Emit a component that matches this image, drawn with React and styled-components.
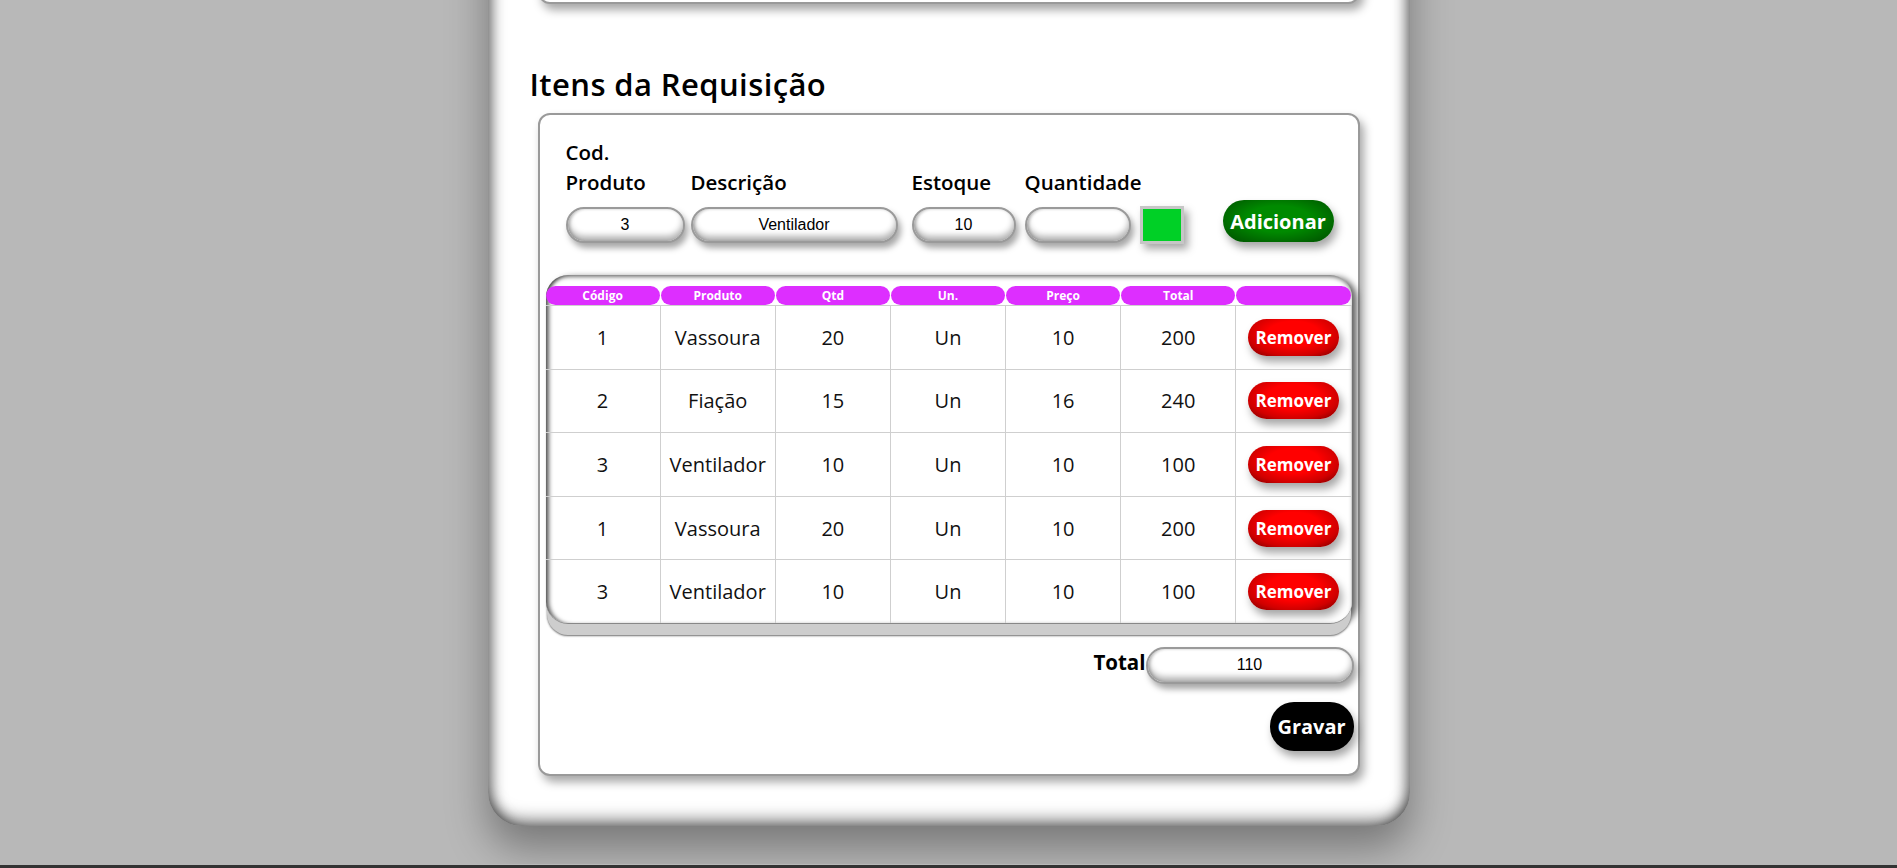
import React from "react";
import styled, { createGlobalStyle } from "styled-components";

const GlobalStyle = createGlobalStyle`
  html, body {
    margin: 0;
    padding: 0;
    background: #b8b8b8;
    overflow: hidden;
  }
  * {
    box-sizing: border-box;
  }
`;

const FONT = `"Open Sans", "Liberation Sans", sans-serif`;

const Page = styled.div`
  display: flex;
  flex-direction: column;
  align-items: center;
  font-family: ${FONT};
  padding-bottom: 38px;
`;

const Card = styled.div`
  width: 922px;
  margin-top: -250px;
  padding: 46px 50px 50px;
  background: #fff;
  border-radius: 34px;
  box-shadow: inset 12px 0 14px -8px rgba(0, 0, 0, 0.55),
    inset -12px 0 14px -8px rgba(0, 0, 0, 0.55),
    inset 0 -14px 16px -8px rgba(0, 0, 0, 0.5),
    0 22px 40px rgba(0, 0, 0, 0.35);
`;

const Panel = styled.div`
  background: #fff;
  border: 2px solid #9a9a9a;
  border-radius: 12px;
  box-shadow: 4px 6px 10px rgba(0, 0, 0, 0.35);
  height: ${(p) => (p.height ? `${p.height}px` : "auto")};
  padding: ${(p) => p.padding || "0"};
`;

const Heading = styled.h2`
  margin: 58px 0 6px -8px;
  font-size: 31px;
  line-height: 45px;
  font-weight: 600;
  letter-spacing: 0.4px;
  color: #000;
`;

const FormRow = styled.div`
  display: flex;
  align-items: flex-end;
  padding-left: 22px;
`;

const Field = styled.div`
  display: flex;
  flex-direction: column;
  width: ${(p) => p.width}px;
  margin-right: ${(p) => p.gap}px;
`;

const Label = styled.label`
  font-size: 20.5px;
  line-height: 30px;
  font-weight: 600;
  color: #000;
  margin-bottom: 10px;
  white-space: ${(p) => (p.wrap ? "normal" : "nowrap")};
`;

const Input = styled.input`
  width: ${(p) => (p.width ? `${p.width}px` : "100%")};
  height: ${(p) => p.h || 36}px;
  border: 2px solid #9a9a9a;
  border-radius: 20px;
  background: #fff;
  text-align: center;
  font-family: "Liberation Sans", Arial, sans-serif;
  font-size: 16px;
  color: #000;
  outline: none;
  box-shadow: inset 0 -5px 6px rgba(0, 0, 0, 0.3),
    inset 2px 0 3px rgba(0, 0, 0, 0.2), 3px 5px 6px rgba(0, 0, 0, 0.35);
`;

const ColorBox = styled.div`
  width: 44px;
  height: 38px;
  margin-right: 39px;
  margin-bottom: -1px;
  background: #00d026;
  border: 3px solid #c6c6c6;
  box-shadow: 4px 5px 8px rgba(0, 0, 0, 0.35);
`;

const PillButton = styled.button`
  border: none;
  border-radius: 24px;
  color: #fff;
  font-family: ${FONT};
  font-weight: 700;
  cursor: pointer;
  width: ${(p) => p.w}px;
  height: ${(p) => p.h}px;
  font-size: ${(p) => p.fs}px;
  background: ${(p) => p.bg};
  box-shadow: 3px 6px 8px rgba(0, 0, 0, 0.35);
  padding: 0;
  white-space: nowrap;
`;

const AddButton = styled(PillButton)`
  align-self: flex-end;
  transform: translateY(-1px);
`;

const TableWrap = styled.div`
  margin: 32px 2px 0;
  padding-top: 11px;
  border-radius: 22px;
  background: #fff;
  box-shadow: inset 0 3px 4px -1px rgba(0, 0, 0, 0.5),
    inset 5px 0 4px -2px rgba(0, 0, 0, 0.6),
    0 12px 0 -1px #cdcdcd, 0 13px 2px -1px #6f6f6f,
    5px 2px 6px rgba(0, 0, 0, 0.6);
  overflow: hidden;
  border-bottom: 1px solid #888;
`;

const Grid = styled.div`
  display: grid;
  grid-template-columns: repeat(7, 1fr);
`;

const HeadCell = styled.div`
  height: 19px;
  margin-right: 1px;
  background: #dd2eff;
  border-radius: 12px;
  color: #fff;
  font-size: 12px;
  font-weight: 700;
  line-height: 19px;
  text-align: center;
`;

const Cell = styled.div`
  height: 63.6px;
  display: flex;
  align-items: center;
  justify-content: center;
  border-top: 1px solid #cfcfcf;
  border-right: 1px solid #cfcfcf;
  font-size: 20px;
  color: #111;
  white-space: nowrap;
  overflow: hidden;
`;

const RemoveButton = styled(PillButton)`
  background: radial-gradient(ellipse at 50% 40%, #ff0000 40%, #d00000 70%, #6e0000 100%);
`;

const TotalRow = styled.div`
  display: flex;
  justify-content: flex-end;
  align-items: center;
  margin-top: 23px;
`;

const TotalLabel = styled.span`
  font-size: 20.5px;
  font-weight: 700;
  color: #000;
  margin-top: -6px;
`;

const SaveRow = styled.div`
  display: flex;
  justify-content: flex-end;
  margin-top: 18px;
`;

const Footer = styled.div`
  position: fixed;
  left: 0;
  right: 0;
  bottom: 0;
  height: 3px;
  background: #333;
`;

const columns = ["Código", "Produto", "Qtd", "Un.", "Preço", "Total", ""];

const items = [
  { cod: 1, nome: "Vassoura", qtd: 20, un: "Un", preco: 10, total: 200 },
  { cod: 2, nome: "Fiação", qtd: 15, un: "Un", preco: 16, total: 240 },
  { cod: 3, nome: "Ventilador", qtd: 10, un: "Un", preco: 10, total: 100 },
  { cod: 1, nome: "Vassoura", qtd: 20, un: "Un", preco: 10, total: 200 },
  { cod: 3, nome: "Ventilador", qtd: 10, un: "Un", preco: 10, total: 100 },
];

export default function App() {
  return (
    <>
      <GlobalStyle />
      <Page>
        <Card>
          <Panel height={208} />
          <Heading>Itens da Requisição</Heading>
          <Panel padding="22px 4px 23px">
            <FormRow>
              <Field width={119} gap={6}>
                <Label wrap>Cod. Produto</Label>
                <Input defaultValue="3" />
              </Field>
              <Field width={207} gap={14}>
                <Label>Descrição</Label>
                <Input defaultValue="Ventilador" />
              </Field>
              <Field width={104} gap={9}>
                <Label>Estoque</Label>
                <Input defaultValue="10" />
              </Field>
              <Field width={106} gap={9}>
                <Label>Quantidade</Label>
                <Input defaultValue="" />
              </Field>
              <ColorBox />
              <AddButton w={111} h={42} fs={20} bg="radial-gradient(ellipse at 50% 45%, #008a00 40%, #005a00 85%, #003d00 100%)">
                Adicionar
              </AddButton>
            </FormRow>

            <TableWrap>
              <Grid>
                {columns.map((c, i) => (
                  <HeadCell key={i}>{c}</HeadCell>
                ))}
              </Grid>
              {items.map((it, i) => (
                <Grid key={i}>
                  <Cell>{it.cod}</Cell>
                  <Cell>{it.nome}</Cell>
                  <Cell>{it.qtd}</Cell>
                  <Cell>{it.un}</Cell>
                  <Cell>{it.preco}</Cell>
                  <Cell>{it.total}</Cell>
                  <Cell>
                    <RemoveButton w={91} h={37} fs={17}>Remover</RemoveButton>
                  </Cell>
                </Grid>
              ))}
            </TableWrap>

            <TotalRow>
              <TotalLabel>Total</TotalLabel>
              <Input width={208} h={37} defaultValue="110" />
            </TotalRow>
            <SaveRow>
              <PillButton w={84} h={49} fs={20} bg="#000">Gravar</PillButton>
            </SaveRow>
          </Panel>
        </Card>
        <Footer />
      </Page>
    </>
  );
}
